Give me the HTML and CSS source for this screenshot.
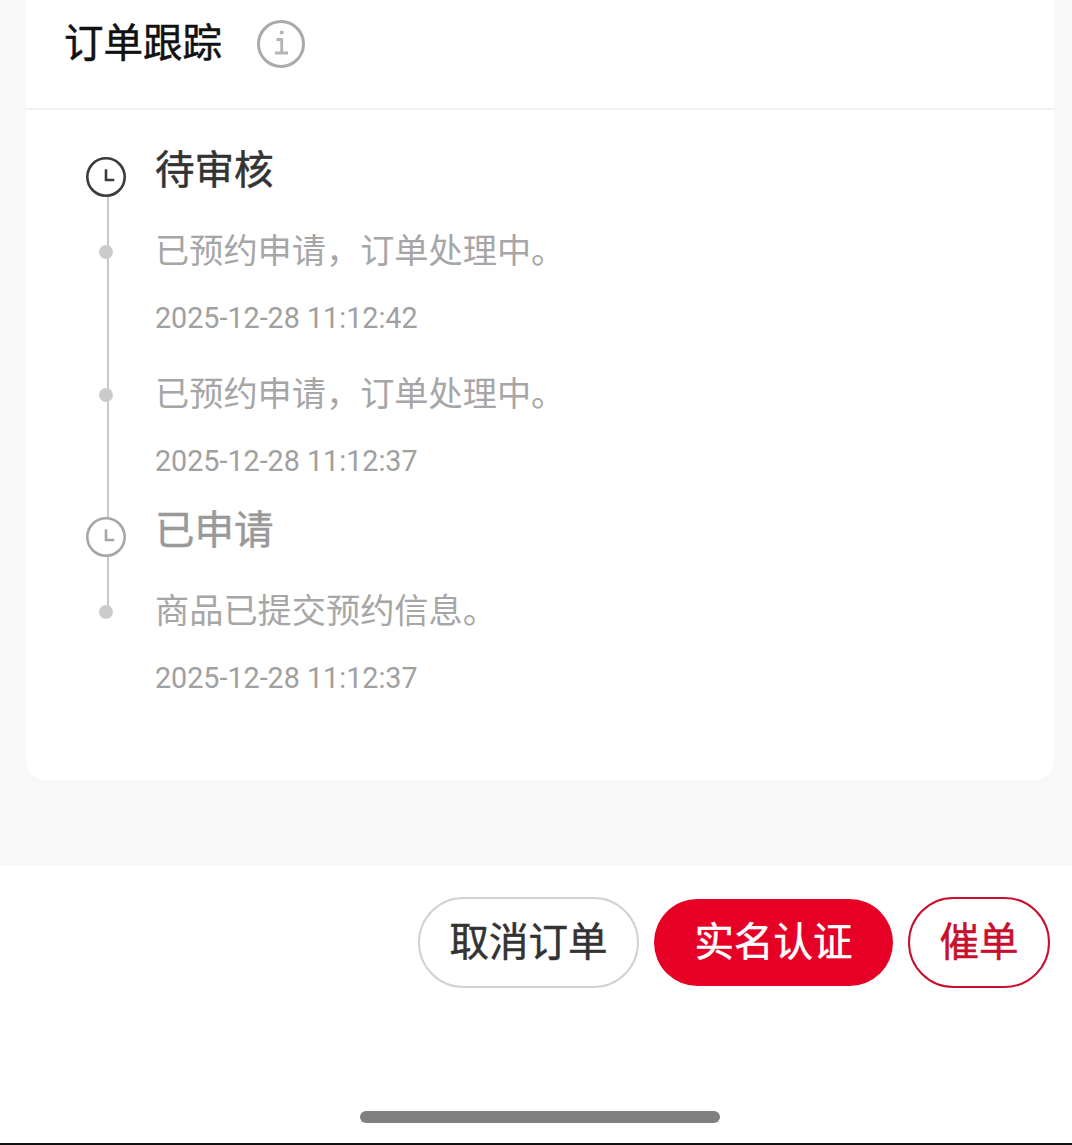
FILE: index.html
```html
<!DOCTYPE html>
<html lang="zh-CN">
<head>
    <meta charset="UTF-8">
    <meta name="viewport" content="width=device-width, initial-scale=1.0">
    <title>订单跟踪</title>
    <link rel="stylesheet" href="styles.css">
</head>
<body>
    <main class="content">
        <section class="card">
            <header class="card-header">
                <h2 class="card-title">订单跟踪</h2>
                <svg class="info-icon" viewBox="0 0 48 48">
                    <circle cx="24" cy="24" r="22.5" fill="none" stroke="#aaaaaa" stroke-width="3"/>
                    <circle cx="24.7" cy="12.5" r="2" fill="#b4b4b4"/>
                    <path d="M19.5 19.5h5.2v13.5M18 33h13" fill="none" stroke="#b4b4b4" stroke-width="2.8"/>
                </svg>
            </header>

            <div class="timeline">
                <div class="step step-active">
                    <div class="step-head">
                        <svg class="clock" viewBox="0 0 40 40">
                            <circle cx="20" cy="20" r="18.7" fill="none" stroke="currentColor" stroke-width="2.6"/>
                            <path d="M20 12.3V23h8.3" fill="none" stroke="currentColor" stroke-width="2.6"/>
                        </svg>
                        <h3 class="step-title">待审核</h3>
                    </div>
                    <div class="log">
                        <div class="log-rail"><span class="dot"></span></div>
                        <div class="log-body">
                            <p class="log-text">已预约申请，订单处理中。</p>
                            <p class="log-time">2025-12-28 11:12:42</p>
                        </div>
                    </div>
                    <div class="log">
                        <div class="log-rail"><span class="dot"></span></div>
                        <div class="log-body">
                            <p class="log-text">已预约申请，订单处理中。</p>
                            <p class="log-time">2025-12-28 11:12:37</p>
                        </div>
                    </div>
                </div>

                <div class="step">
                    <div class="step-head">
                        <svg class="clock" viewBox="0 0 40 40">
                            <circle cx="20" cy="20" r="18.7" fill="none" stroke="currentColor" stroke-width="2.6"/>
                            <path d="M20 12.3V23h8.3" fill="none" stroke="currentColor" stroke-width="2.6"/>
                        </svg>
                        <h3 class="step-title">已申请</h3>
                    </div>
                    <div class="log log-last">
                        <div class="log-rail"><span class="dot"></span></div>
                        <div class="log-body">
                            <p class="log-text">商品已提交预约信息。</p>
                            <p class="log-time">2025-12-28 11:12:37</p>
                        </div>
                    </div>
                </div>
            </div>
        </section>
    </main>

    <footer class="action-bar">
        <div class="actions">
            <button class="btn btn-plain">取消订单</button>
            <button class="btn btn-primary">实名认证</button>
            <button class="btn btn-outline">催单</button>
        </div>
        <div class="home-bar"></div>
    </footer>
</body>
</html>
```
FILE: styles.css
```css
* {
    box-sizing: border-box;
}

html, body {
    margin: 0;
    height: 1145px;
    overflow: hidden;
}

body {
    display: flex;
    flex-direction: column;
    font-family: "Noto Sans CJK SC", "Noto Sans", sans-serif;
    background-color: #ffffff;
}

.content {
    height: 866px;
    padding: 0 18px 0 26px;
    background-color: #f8f8f8;
}

.card {
    height: 780px;
    background-color: #ffffff;
    border-radius: 0 0 20px 20px;
}

.card-header {
    height: 110px;
    display: flex;
    align-items: flex-start;
    padding: 20px 0 0 38px;
    border-bottom: 2px solid #f1f1f1;
}

.card-title {
    margin: -3px 0 0;
    font-size: 39.5px;
    line-height: 46px;
    font-weight: 400;
    -webkit-text-stroke: 0.5px;
    color: #111111;
}

.info-icon {
    width: 48px;
    height: 48px;
    margin-left: 35px;
}

.timeline {
    padding: 47px 0 0 60px;
}

.step-head {
    display: flex;
    align-items: flex-start;
    height: 40px;
}

.clock {
    width: 40px;
    height: 40px;
    flex-shrink: 0;
    color: #3c3c3c;
}

.step-title {
    margin: -10px 0 0 29px;
    font-size: 39.5px;
    line-height: 40px;
    font-weight: 400;
    -webkit-text-stroke: 0.5px;
    color: #999999;
}

.step-active .step-title {
    color: #333333;
}

.step:not(.step-active) .clock {
    color: #a6a6a6;
}

.log {
    display: flex;
}

.log-rail {
    position: relative;
    width: 40px;
    flex-shrink: 0;
}

.log-rail::before {
    content: "";
    position: absolute;
    top: 0;
    bottom: 0;
    left: 21px;
    width: 2px;
    background-color: #c8c8c8;
}

.log-last .log-rail::before {
    bottom: auto;
    height: 55px;
}

.dot {
    position: absolute;
    top: 48px;
    left: 13px;
    width: 14px;
    height: 14px;
    border-radius: 50%;
    background-color: #cbcbcb;
}

.log-body {
    margin-left: 29px;
    padding-top: 33px;
    padding-bottom: 4px;
}

.log:last-child .log-body {
    padding-bottom: 38px;
}

.log-text {
    margin: 0;
    font-size: 34.2px;
    line-height: 36px;
    color: #a6a6a6;
}

.log-time {
    margin: 34px 0 0;
    font-family: Roboto, sans-serif;
    font-size: 28.7px;
    line-height: 36px;
    color: #a0a0a0;
}

.action-bar {
    flex: 1;
    display: flex;
    flex-direction: column;
    border-bottom: 2px solid #111111;
}

.actions {
    display: flex;
    justify-content: flex-end;
    align-items: center;
    gap: 15px;
    padding: 31px 22px 0 0;
}

.btn {
    width: 221px;
    height: 91px;
    padding: 0 0 7px;
    font-family: inherit;
    font-size: 39.5px;
    font-weight: 400;
    -webkit-text-stroke: 0.5px;
    line-height: 1;
    border-radius: 46px;
    border: 2px solid #d2d2d2;
    background-color: #ffffff;
    color: #333333;
}

.btn-primary {
    height: 87px;
    width: 239px;
    border: none;
    background-color: #e60026;
    color: #ffffff;
}

.btn-outline {
    width: 142px;
    border-color: #c8102e;
    color: #c8102e;
}

.home-bar {
    width: 360px;
    height: 12px;
    margin: 123px 0 0 360px;
    border-radius: 6px;
    background-color: #808080;
}
```
